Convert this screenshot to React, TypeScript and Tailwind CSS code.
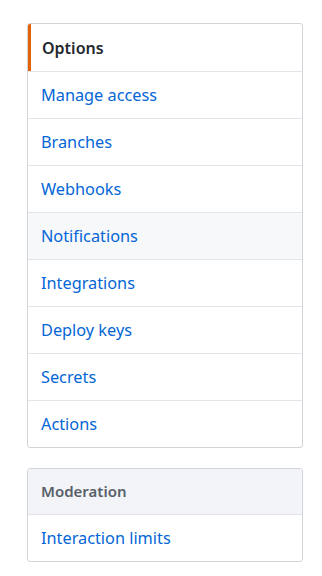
const items = [
  "Manage access",
  "Branches",
  "Webhooks",
  "Notifications",
  "Integrations",
  "Deploy keys",
  "Secrets",
  "Actions",
];

export default function App() {
  return (
    <div className="min-h-[576px] bg-white pt-[23px] pl-[27px] pr-[19px] font-['Noto_Sans',sans-serif]">
      <nav className="overflow-hidden rounded-[3px] border border-[#d1d5da]">
        <div className="flex h-[47px] items-center border-l-[3px] border-[#e36209] pl-[11px] text-[16px] font-semibold text-[#24292e]">
          Options
        </div>
        {items.map((item) => (
          <a
            key={item}
            href="#"
            className={
              "flex h-[47px] items-center border-t border-[#e1e4e8] pl-[13px] text-[16.3px] text-[#0366d6] " +
              (item === "Notifications" ? "bg-[#f6f8fa]" : "")
            }
          >
            {item}
          </a>
        ))}
      </nav>

      <nav className="mt-[20px] overflow-hidden rounded-[3px] border border-[#d1d5da]">
        <div className="flex h-[45px] items-center bg-[#f3f4f7] pl-[13px] text-[15px] font-semibold text-[#586069]">
          Moderation
        </div>
        <a
          href="#"
          className="flex h-[47px] items-center border-t border-[#e1e4e8] pl-[13px] text-[16.3px] text-[#0366d6]"
        >
          Interaction limits
        </a>
      </nav>
    </div>
  );
}
